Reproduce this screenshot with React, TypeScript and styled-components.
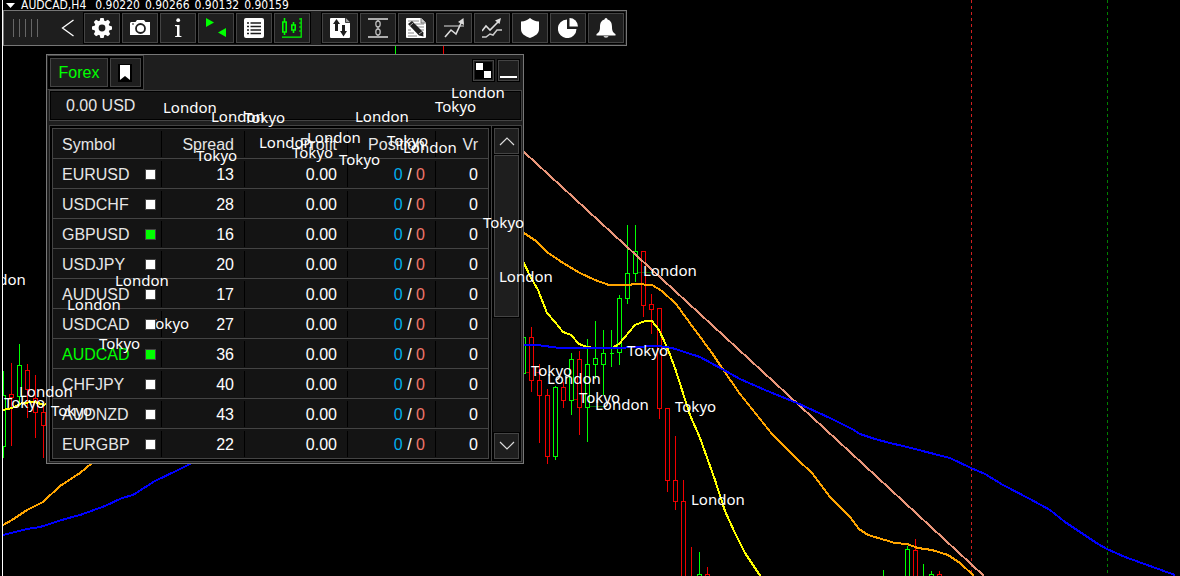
import React from "react";
import styled, { createGlobalStyle, css } from "styled-components";

const LIME = "#00ff00";
const RED = "#f00000";
const EDGE = "#777777";
const LINE = "#444444";
const FACE = "#1e1e1e";
const WELL = "#141414";

const GlobalStyle = createGlobalStyle`
  *, *::before, *::after { box-sizing: border-box; }
  body { margin: 0; background: #000; }
  button { padding: 0; margin: 0; font: inherit; color: inherit; cursor: pointer; }
`;

/* ---------- chart window ---------- */

const ChartWindow = styled.main`
  position: relative;
  min-height: 100vh;
  margin-left: 2px;
  border-left: 1px solid #fff;
  overflow: hidden;
  background: #000;
  color: #e6e6e6;
  font: 16px/20px "Liberation Sans", Arial, sans-serif;
`;

const ChartCanvas = styled.svg`
  position: absolute;
  inset: 0;
  width: 100%;
  height: 100%;
`;

const Content = styled.div`
  position: relative;
`;

const QuoteLine = styled.header`
  display: flex;
  align-items: center;
  gap: 5px;
  height: 10px;
  padding-left: 3px;
  color: #fff;
  font: 12px/10px "DejaVu Sans Condensed", Tahoma, sans-serif;
  white-space: nowrap;
`;

const Instrument = styled.span`
  padding: 0 4px 0 1px;
`;

const SessionLabel = styled.span`
  position: absolute;
  z-index: 1;
  color: #fff;
  font: 15px/20px "Noto Sans", "Segoe UI", sans-serif;
  white-space: nowrap;
  pointer-events: none;
`;

/* ---------- toolbar ---------- */

const Toolbar = styled.nav`
  display: flex;
  align-items: center;
  width: max-content;
  padding: 1px;
  border: 1px solid ${EDGE};
  background: ${FACE};
`;

const Grip = styled.div`
  width: 25px;
  height: 18px;
  margin-left: 8px;
  background: repeating-linear-gradient(90deg, #666 0 1px, transparent 1px 6px);
`;

const BackButton = styled.button`
  display: grid;
  place-items: center;
  width: 30px;
  height: 30px;
  margin-left: 15px;
  border: 0;
  background: none;
`;

const ButtonGroup = styled.div<{ $spaced?: boolean }>`
  display: flex;
  gap: 2px;
  padding: 1px;
  margin-left: ${(p) => (p.$spaced ? "10px" : "0")};
  background: #000;
`;

const ToolButton = styled.button`
  display: grid;
  place-items: center;
  width: 36px;
  height: 30px;
  border: 1px solid ${LINE};
  background: ${FACE};
`;

/* ---------- symbols panel ---------- */

const Panel = styled.section`
  width: 478px;
  margin: 8px 0 0 43px;
  padding: 0 1px 1px 0;
  border: 1px solid ${EDGE};
  background: ${FACE};
`;

const PanelHeader = styled.div`
  display: flex;
  justify-content: space-between;
  align-items: flex-start;
`;

const Tabs = styled.div`
  display: flex;
  gap: 2px;
  padding: 2px;
  border: 1px solid ${LINE};
  border-left-color: ${FACE};
  background: #000;
`;

const Tab = styled.button<{ $narrow?: boolean }>`
  display: grid;
  place-items: center;
  width: ${(p) => (p.$narrow ? "31px" : "58px")};
  height: 29px;
  border: 1px solid ${LINE};
  background: ${FACE};
  color: ${LIME};
`;

const WindowButtons = styled.div`
  display: flex;
  gap: 2px;
  padding: 4px 2px 0 0;
`;

const WindowButton = styled.button`
  display: grid;
  place-items: center;
  width: 23px;
  height: 23px;
  border: 1px solid #000;
  background: ${FACE};
  box-shadow: inset 0 0 0 1px ${LINE};
`;

const framed = css`
  margin-left: 2px;
  border: 1px solid ${LINE};
`;

const Balance = styled.div`
  ${framed}
  height: 31px;
  padding: 5px 16px 0;
  background: ${WELL};
  box-shadow: inset 0 0 0 1px #000;
`;

const ListFrame = styled.div`
  ${framed}
  display: flex;
  gap: 2px;
  margin-top: 4px;
  padding-left: 2px;
  background: #000;
`;

const SymbolTable = styled.table`
  flex: 1;
  margin: 2px 0;
  table-layout: fixed;
  border-collapse: separate;
  border-spacing: 0;
  border: 1px solid ${LINE};
  border-bottom: 0;
  background: ${WELL};
`;

const cell = css`
  height: 30px;
  padding: 2px 11px 0 0;
  border-bottom: 1px solid ${LINE};
  font-weight: normal;
  text-align: right;
  &:not(:last-child) {
    background: linear-gradient(#000, #000) right 2px / 1px 26px no-repeat;
  }
  &:first-child {
    padding: 2px 6px 0 9px;
    text-align: left;
  }
  &:last-child {
    padding-right: 10px;
  }
`;

const HeadCell = styled.th`
  ${cell}
`;

const Cell = styled.td`
  ${cell}
  color: #fff;
`;

const SymbolName = styled.label<{ $current?: boolean }>`
  display: flex;
  align-items: center;
  justify-content: space-between;
  color: ${(p) => (p.$current ? LIME : "#e6e6e6")};
`;

const Marker = styled.input`
  appearance: none;
  position: relative;
  z-index: 2;
  width: 11px;
  height: 11px;
  margin: 0 0 1px;
  border: 1px solid ${LINE};
  background: #fff;
  &:checked {
    background: ${LIME};
  }
`;

const Buys = styled.span`
  color: #00aeef;
`;

const Sells = styled.span`
  color: #f0766a;
`;

const ScrollBar = styled.div`
  display: grid;
  grid-template-rows: 26px 1fr 26px;
  gap: 1px;
  padding: 2px;
  border-left: 1px solid ${LINE};
  background: ${WELL};
  box-shadow: inset 0 0 0 1px #000;
`;

const ScrollButton = styled.button`
  display: grid;
  place-items: center;
  width: 25px;
  height: 26px;
  border: 1px solid ${LINE};
  background: ${FACE};
  outline: 1px solid #000;
`;

const ScrollThumb = styled.div`
  height: 162px;
  border: 1px solid ${LINE};
  background: ${FACE};
  outline: 1px solid #000;
`;

/* ---------- icons ---------- */

const Svg = ({ w = 20, h = 20, children }: { w?: number; h?: number; children: React.ReactNode }) => (
  <svg width={w} height={h} viewBox={`0 0 ${w} ${h}`} fill="none" aria-hidden="true">
    {children}
  </svg>
);

const GearIcon = () => (
  <Svg>
    <g fill="#fff">
      {[0, 45, 90, 135].map((a) => (
        <path key={a} d="M7.6 3 8.4 0h3.2l.8 3v14l-.8 3H8.4l-.8-3z" transform={`rotate(${a} 10 10)`} />
      ))}
      <circle cx="10" cy="10" r="7.6" />
    </g>
    <circle cx="10" cy="10" r="3.4" fill={FACE} />
  </Svg>
);

const CameraIcon = () => (
  <Svg>
    <path d="M1 4h4.500L7 2h7l1.500 2H20v13H0V5z" fill="#fff" />
    <circle cx="10.500" cy="10.500" r="4.500" fill="#fff" stroke={FACE} strokeWidth="1.800" />
    <path d="M2 6h2" stroke={FACE} />
  </Svg>
);

const InfoIcon = () => (
  <Svg>
    <path d="M7 7h4.500v10.700l2 .5v.8H7v-.8l2-.5V8.500l-2-.5z" fill="#fff" />
    <circle cx="10.200" cy="2.200" r="1.900" fill="#fff" />
  </Svg>
);

const SwapIcon = () => (
  <Svg>
    <path d="M0 0 8 4.500 0 9zM20 10v9l-8-4.500z" fill={LIME} />
  </Svg>
);

const ListIcon = () => (
  <Svg>
    <rect width="20" height="20" rx="2" fill="#fff" />
    <path d="M3 5h2M3 8.500h2M3 12h2M3 15.500h2M6.500 5H17M6.500 8.500H17M6.500 12H17M6.500 15.500H17" stroke={FACE} strokeWidth="1.400" />
  </Svg>
);

const CandlesIcon = () => (
  <Svg>
    <path d="M2.500 0v4M2.500 14v3M.8 4h3.400v10H.8zM11.500 4v3M11.500 12v3M9.800 7h3.400v5H9.800z" stroke={LIME} strokeWidth="1.600" />
    <path d="M0 19.200h19.200V0M17 1h2M17 5h2M17 9h2M17 13h2" stroke={LIME} strokeWidth="1.200" />
  </Svg>
);

const TransferIcon = () => (
  <Svg>
    <path d="M1 0h14.500L20 4.500V19a1 1 0 0 1-1 1H1a1 1 0 0 1-1-1V1a1 1 0 0 1 1-1z" fill="#fff" />
    <path d="M15.500 0v4.500H20" stroke={FACE} fill="#999" strokeWidth=".8" />
    <path d="M5 13V6H3l3.500-5L10 6H8v7zM12 7h3v6h2l-3.500 5.500L10 13h2z" fill={FACE} />
  </Svg>
);

const ChainIcon = () => (
  <Svg>
    <path d="M0 1h20M0 19h20" stroke="#ddd" strokeWidth="1.400" />
    <path d="M10 1v2M10 8.500v3M10 17v2" stroke="#aaa" strokeWidth="1.600" />
    <ellipse cx="10" cy="6" rx="2.200" ry="3" stroke="#bbb" strokeWidth="1.300" />
    <ellipse cx="10" cy="14" rx="2.200" ry="3" stroke="#bbb" strokeWidth="1.300" />
  </Svg>
);

const NoteIcon = () => (
  <Svg>
    <path d="M1 0h14l5 5v14a1 1 0 0 1-1 1H1a1 1 0 0 1-1-1V1a1 1 0 0 1 1-1z" fill="#fff" />
    <path d="M2 3h11M9 6h9M11 9h7M13 12h5M2 12h3M2 15h6M2 18h9M15 15h3" stroke="#888" />
    <path d="M15 0v5h5" stroke="#666" fill="#ccc" strokeWidth=".8" />
    <path d="m2 6 4-3 11 11 .5 4.500-4.500-1z" fill={FACE} />
    <path d="m3.500 8 3.800-3.200M13 16l3.500-2.500" stroke="#ccc" strokeWidth=".8" />
  </Svg>
);

const BreakoutIcon = () => (
  <Svg>
    <path d="M0 8h20" stroke="#999" strokeWidth="1.600" />
    <path d="m1 19 6-7 5 4 6-13" stroke="#ddd" strokeWidth="1.600" />
    <path d="m19.500 0 .5 7-6-3z" fill="#ddd" />
  </Svg>
);

const TrendIcon = () => (
  <Svg>
    <path d="m0 13 4-5 4 4 9-9" stroke="#ddd" strokeWidth="1.600" />
    <path d="m19 0-1.500 6L13 2.500z" fill="#ddd" />
    <path d="M0 19h4l4-3 3 1 4-5h5" stroke="#ccc" strokeWidth="1.500" />
  </Svg>
);

const ShieldIcon = () => (
  <Svg>
    <path d="M1 3.500C5 3.500 7 2 10 0c3 2 5 3.500 9 3.500V11c0 5-4 7-9 9-5-2-9-4-9-9z" fill="#fff" />
  </Svg>
);

const PieIcon = () => (
  <Svg>
    <path d="M9 1.500V11h9.500A9.300 9.300 0 1 1 9 1.500z" fill="#fff" />
    <path d="M11.500 0A8.500 8.500 0 0 1 20 8.500h-8.500z" fill="#fff" />
  </Svg>
);

const BellIcon = () => (
  <Svg>
    <path d="M8.500 1.500a1.500 1.500 0 0 1 3 0c3.500 1 4.500 4 4.500 7.500 0 4 1 5.500 3.500 7v1.500H.5V16C3 14.500 4 13 4 9c0-3.500 1-6.500 4.500-7.500z" fill="#fff" />
    <path d="M7.500 18.200h5c-.4 1.800-4.600 1.800-5 0z" fill="#fff" />
  </Svg>
);

const ChevronLeft = () => (
  <Svg w={14} h={18}>
    <path d="M12.500 1 1.500 9l11 8" stroke="#fff" strokeWidth="1.300" />
  </Svg>
);

const ScrollChevron = ({ down }: { down?: boolean }) => (
  <Svg w={16} h={10}>
    <path d={down ? "m1 1 7 7 7-7" : "m1 9 7-7 7 7"} stroke="#ddd" strokeWidth="1.200" />
  </Svg>
);

const BookmarkIcon = () => (
  <Svg w={15} h={18}>
    <path d="M0 0h14v18H0z" fill="#000" />
    <path d="M2 1h10v15l-5-4-5 4z" fill="#fff" />
  </Svg>
);

const CheckerIcon = () => (
  <Svg w={17} h={17}>
    <path d="M0 0h17v17H0z" fill="#000" />
    <path d="M1 1h7v7H1zM9 9h7v7H9z" fill="#fff" />
  </Svg>
);

const MinimizeIcon = () => (
  <Svg w={17} h={17}>
    <path d="M0 14h17v2H0z" fill="#fff" />
  </Svg>
);

/* ---------- data ---------- */

const quotes = ["0.90220", "0.90266", "0.90132", "0.90159"];

const systemTools = [
  ["Settings", GearIcon],
  ["Screenshot", CameraIcon],
  ["Information", InfoIcon],
  ["Switch", SwapIcon],
  ["List", ListIcon],
  ["Chart", CandlesIcon],
] as const;

const tradeTools = [
  ["Orders", TransferIcon],
  ["Range", ChainIcon],
  ["Notes", NoteIcon],
  ["Breakout", BreakoutIcon],
  ["Trend", TrendIcon],
  ["Protection", ShieldIcon],
  ["Statistics", PieIcon],
  ["Alerts", BellIcon],
] as const;

const symbols = [
  { name: "EURUSD", spread: 13 },
  { name: "USDCHF", spread: 28 },
  { name: "GBPUSD", spread: 16, active: true },
  { name: "USDJPY", spread: 20 },
  { name: "AUDUSD", spread: 17 },
  { name: "USDCAD", spread: 27 },
  { name: "AUDCAD", spread: 36, active: true, current: true },
  { name: "CHFJPY", spread: 40 },
  { name: "AUDNZD", spread: 43 },
  { name: "EURGBP", spread: 22 },
];

/* [x, high, body top, body bottom, low, rising] */
const candles: [number, number, number, number, number, boolean][] = [
  [0, 371, 395, 446, 457, true],
  [8, 363, 394, 397, 445, false],
  [16, 344, 365, 396, 405, true],
  [24, 364, 370, 389, 417, false],
  [32, 375, 398, 412, 437, false],
  [40, 404, 412, 425, 457, false],
  [392, 30, 70, 90, 100, true],
  [440, 30, 70, 90, 100, false],
  [520, 337, 337, 373, 373, true],
  [528, 327, 337, 380, 391, false],
  [536, 364, 380, 395, 442, false],
  [544, 389, 395, 456, 463, false],
  [552, 386, 387, 456, 459, true],
  [560, 382, 387, 400, 407, false],
  [568, 353, 359, 400, 414, true],
  [576, 351, 359, 407, 434, false],
  [584, 339, 364, 407, 441, true],
  [592, 321, 358, 364, 378, true],
  [600, 330, 353, 364, 394, true],
  [608, 330, 353, 353, 366, true],
  [616, 295, 298, 352, 364, true],
  [624, 225, 273, 298, 303, true],
  [632, 225, 251, 273, 281, true],
  [640, 251, 251, 305, 316, false],
  [648, 294, 304, 309, 333, false],
  [656, 308, 308, 408, 418, false],
  [664, 408, 408, 480, 491, false],
  [672, 436, 480, 501, 509, false],
  [680, 480, 501, 590, 600, false],
  [688, 547, 580, 590, 600, false],
  [696, 552, 574, 590, 600, true],
  [704, 567, 574, 590, 600, false],
  [880, 570, 580, 590, 600, true],
  [904, 546, 549, 590, 600, true],
  [912, 539, 550, 590, 600, false],
  [920, 564, 580, 590, 600, true],
  [928, 571, 574, 590, 600, true],
  [936, 571, 574, 590, 600, false],
];

const curves = [
  { color: "#e9967a", points: "521,152 584,210 847,452 981,576" },
  {
    color: "#ffa500",
    points:
      "0,525 9,520 24,510 40,502 57,486 77,473 89,463 300,300 521,233 533,241 544,252 560,263 577,273 592,280 606,285 625,285 632,284 649,285 659,291 673,304 692,330 709,353 719,368 737,394 769,434 794,459 809,473 827,497 847,517 856,529 865,535 882,540 892,543 904,544 915,548 929,550 945,555 957,563 971,576",
  },
  {
    color: "#ffff00",
    points:
      "0,410 9,408 19,403 32,402 41,405 300,300 521,263 527,276 535,290 544,313 552,322 560,332 568,335 576,344 584,347 592,348 609,348 616,344 632,325 642,321 649,321 656,330 664,347 672,368 679,390 687,415 697,438 712,480 722,511 732,533 742,553 758,577",
  },
  {
    color: "#0000ff",
    points:
      "0,535 24,529 37,527 62,519 77,515 102,506 119,498 130,495 152,481 175,470 187,464 300,400 521,345 534,345 557,348 617,348 629,347 656,346 669,348 697,357 719,369 737,379 762,390 794,403 827,418 849,429 857,434 872,439 887,443 904,447 947,458 968,468 982,474 1000,485 1027,499 1047,510 1062,522 1077,532 1095,544 1104,549 1122,557 1147,566 1172,575",
  },
];

const London = "London";
const Tokyo = "Tokyo";

/* [session, x, y] on the chart canvas */
const sessions: [string, number, number][] = [
  [London, -31, 269],
  [London, 16, 381],
  [Tokyo, 1, 392],
  [Tokyo, 48, 400],
  [London, 160, 97],
  [London, 208, 106],
  [Tokyo, 241, 107],
  [London, 448, 82],
  [Tokyo, 432, 96],
  [London, 352, 106],
  [London, 256, 132],
  [London, 304, 127],
  [Tokyo, 289, 142],
  [Tokyo, 336, 149],
  [Tokyo, 384, 130],
  [London, 400, 137],
  [Tokyo, 193, 145],
  [Tokyo, 480, 212],
  [London, 496, 266],
  [London, 112, 270],
  [London, 64, 294],
  [Tokyo, 145, 313],
  [Tokyo, 96, 333],
  [London, 640, 260],
  [Tokyo, 624, 340],
  [Tokyo, 528, 360],
  [London, 544, 368],
  [Tokyo, 576, 387],
  [London, 592, 394],
  [Tokyo, 672, 396],
  [London, 688, 489],
];

const PriceChart = () => (
  <ChartCanvas aria-hidden="true" fill="none" shapeRendering="crispEdges">
    <path d="M968.500 0v2000" stroke="#d02020" strokeDasharray="3 3" />
    <path d="M1104.500 0v2000" stroke="#008000" strokeDasharray="3 3" />
    <path d="M635 272.500h15M587 406.500h15" stroke="#006000" />
    <path d="M522 372.500h5M533 372.500h4M570 399.500h5" stroke="#a00000" />
    {candles.map(([x, high, top, bottom, low, rising]) => {
      const c = x + 0.5;
      return (
        <g key={x} stroke={rising ? LIME : RED}>
          <path d={`M${c} ${high}V${top}M${c} ${bottom + 1}V${low + 1}`} />
          <path d={`M${c - 2} ${top + 0.5}h4V${bottom + 0.5}h-4z`} />
        </g>
      );
    })}
    {curves.map((line) => (
      <polyline key={line.color} points={line.points} stroke={line.color} strokeWidth="2" />
    ))}
  </ChartCanvas>
);

export default function App() {
  return (
    <>
      <GlobalStyle />
      <ChartWindow>
        <PriceChart />
        <Content>
          <QuoteLine>
            <Svg w={9} h={5}>
              <path d="M0 0h9L4.500 5z" fill="#fff" />
            </Svg>
            <Instrument>AUDCAD,H4</Instrument>
            {quotes.map((q) => (
              <span key={q}>{q}</span>
            ))}
          </QuoteLine>

          <Toolbar aria-label="Tools">
            <Grip />
            <BackButton aria-label="Collapse">
              <ChevronLeft />
            </BackButton>
            <ButtonGroup>
              {systemTools.map(([label, Icon]) => (
                <ToolButton key={label} aria-label={label}>
                  <Icon />
                </ToolButton>
              ))}
            </ButtonGroup>
            <ButtonGroup $spaced>
              {tradeTools.map(([label, Icon]) => (
                <ToolButton key={label} aria-label={label}>
                  <Icon />
                </ToolButton>
              ))}
            </ButtonGroup>
          </Toolbar>

          <Panel aria-label="Symbols">
            <PanelHeader>
              <Tabs>
                <Tab>Forex</Tab>
                <Tab $narrow aria-label="Bookmarks">
                  <BookmarkIcon />
                </Tab>
              </Tabs>
              <WindowButtons>
                <WindowButton aria-label="Theme">
                  <CheckerIcon />
                </WindowButton>
                <WindowButton aria-label="Minimize">
                  <MinimizeIcon />
                </WindowButton>
              </WindowButtons>
            </PanelHeader>

            <Balance>0.00 USD</Balance>

            <ListFrame>
              <SymbolTable>
                <colgroup>
                  <col width="109" />
                  <col width="83" />
                  <col width="103" />
                  <col width="88" />
                  <col width="52" />
                </colgroup>
                <thead>
                  <tr>
                    <HeadCell>Symbol</HeadCell>
                    <HeadCell>Spread</HeadCell>
                    <HeadCell>Profit</HeadCell>
                    <HeadCell>Position</HeadCell>
                    <HeadCell>Vr</HeadCell>
                  </tr>
                </thead>
                <tbody>
                  {symbols.map((s) => (
                    <tr key={s.name}>
                      <Cell>
                        <SymbolName $current={s.current}>
                          {s.name}
                          <Marker type="checkbox" defaultChecked={s.active} />
                        </SymbolName>
                      </Cell>
                      <Cell>{s.spread}</Cell>
                      <Cell>0.00</Cell>
                      <Cell>
                        <Buys>0</Buys> / <Sells>0</Sells>
                      </Cell>
                      <Cell>0</Cell>
                    </tr>
                  ))}
                </tbody>
              </SymbolTable>
              <ScrollBar>
                <ScrollButton aria-label="Scroll up">
                  <ScrollChevron />
                </ScrollButton>
                <ScrollThumb />
                <ScrollButton aria-label="Scroll down">
                  <ScrollChevron down />
                </ScrollButton>
              </ScrollBar>
            </ListFrame>
          </Panel>
        </Content>

        {sessions.map(([name, x, y]) => (
          <SessionLabel key={`${x}-${y}`} style={{ left: x, top: y }}>
            {name}
          </SessionLabel>
        ))}
      </ChartWindow>
    </>
  );
}
